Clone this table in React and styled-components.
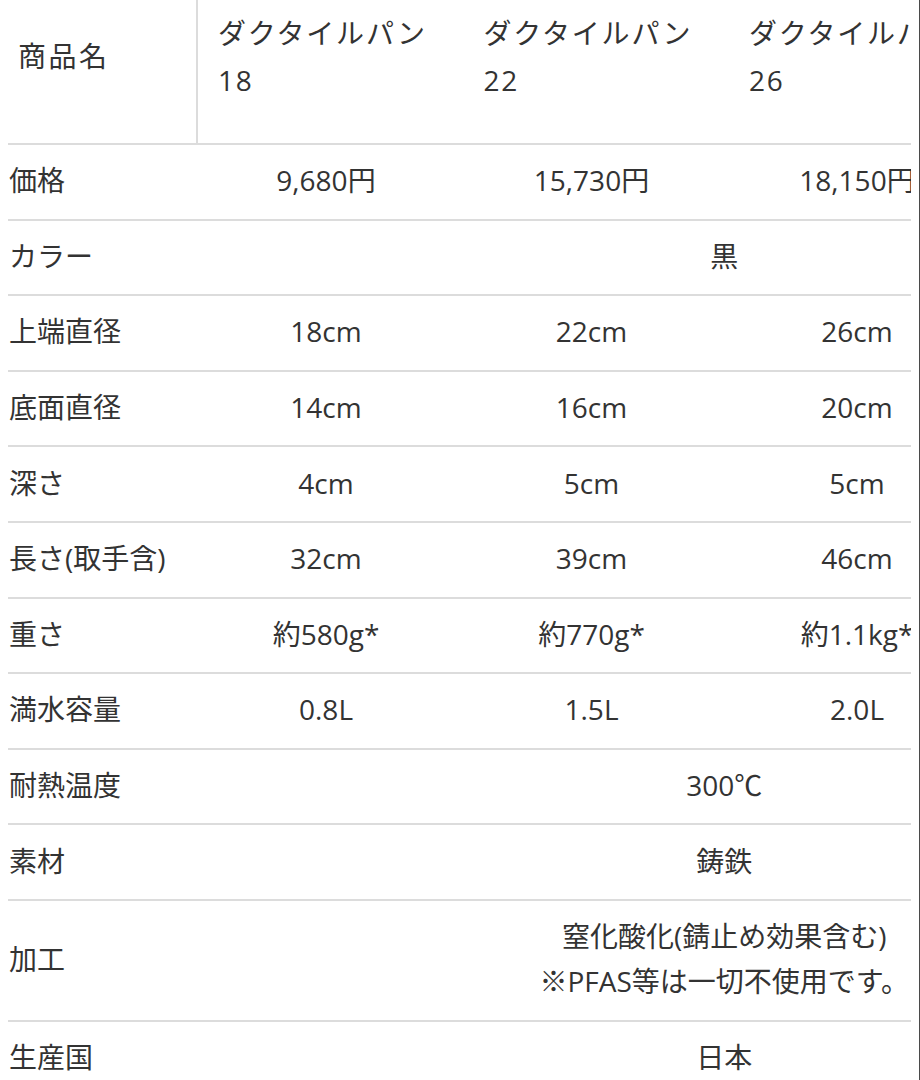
import React from "react";
import styled, { createGlobalStyle } from "styled-components";

const GlobalStyle = createGlobalStyle`
  html, body {
    margin: 0;
    padding: 0;
    background: #ffffff;
  }
  body {
    font-family: "Open Sans", "Noto Sans CJK JP", sans-serif;
    color: #333333;
  }
`;

const Page = styled.div`
  width: 920px;
  min-height: 1080px;
  box-sizing: border-box;
  padding-left: 8px;
  border-right: 1px solid #4a4a4a;
  overflow: hidden;
`;

const Scroller = styled.div`
  width: 903px;
  overflow: hidden;
`;

const Table = styled.div`
  width: max-content;
`;

const HeaderRow = styled.div`
  display: grid;
  grid-template-columns: 190px repeat(4, 265.5px);
  border-bottom: 2px solid #dcdcdc;
`;

const HeadLabel = styled.div`
  display: flex;
  align-items: center;
  padding: 9.5px 0 39.5px 10px;
  border-right: 2px solid #dcdcdc;
  font-size: 28px;
  line-height: 47px;
  letter-spacing: 2.5px;
`;

const HeadCell = styled.div`
  padding: 9.5px 16px 39.5px 20px;
  font-size: 28px;
  line-height: 47px;
  letter-spacing: 1.8px;
`;

const Row = styled.div`
  display: grid;
  grid-template-columns: 185.25px repeat(4, 265.5px);
  align-items: center;
  border-bottom: 2px solid #dcdcdc;
`;

const Label = styled.div`
  padding: 13.3px 0 15.3px 1px;
  font-size: 28px;
  line-height: 45px;
  white-space: nowrap;
`;

const Value = styled.div`
  grid-column: span ${(p) => p.$span || 1};
  padding: 13.3px 0 15.3px;
  text-align: center;
  font-size: 28px;
  line-height: 45px;
  white-space: nowrap;
`;

const products = ["18", "22", "26", ""];

const rows = [
  { label: "価格", values: ["9,680円", "15,730円", "18,150円", ""] },
  { label: "カラー", span: ["黒"] },
  { label: "上端直径", values: ["18cm", "22cm", "26cm", ""] },
  { label: "底面直径", values: ["14cm", "16cm", "20cm", ""] },
  { label: "深さ", values: ["4cm", "5cm", "5cm", ""] },
  { label: "長さ(取手含)", values: ["32cm", "39cm", "46cm", ""] },
  { label: "重さ", values: ["約580g*", "約770g*", "約1.1kg*", ""] },
  { label: "満水容量", values: ["0.8L", "1.5L", "2.0L", ""] },
  { label: "耐熱温度", span: ["300℃"] },
  { label: "素材", span: ["鋳鉄"] },
  { label: "加工", span: ["窒化酸化(錆止め効果含む)", "※PFAS等は一切不使用です。"] },
  { label: "生産国", span: ["日本"] },
];

export default function App() {
  return (
    <>
      <GlobalStyle />
      <Page>
        <Scroller>
          <Table>
            <HeaderRow>
              <HeadLabel>商品名</HeadLabel>
              {products.map((size, i) => (
                <HeadCell key={i}>
                  {size ? (
                    <>
                      ダクタイルパン
                      <br />
                      {size}
                    </>
                  ) : null}
                </HeadCell>
              ))}
            </HeaderRow>
            {rows.map((row) => (
              <Row key={row.label}>
                <Label>{row.label}</Label>
                {row.span ? (
                  <Value $span={4}>
                    {row.span.map((line, i) => (
                      <React.Fragment key={i}>
                        {i > 0 && <br />}
                        {line}
                      </React.Fragment>
                    ))}
                  </Value>
                ) : (
                  row.values.map((v, i) => <Value key={i}>{v}</Value>)
                )}
              </Row>
            ))}
          </Table>
        </Scroller>
      </Page>
    </>
  );
}
